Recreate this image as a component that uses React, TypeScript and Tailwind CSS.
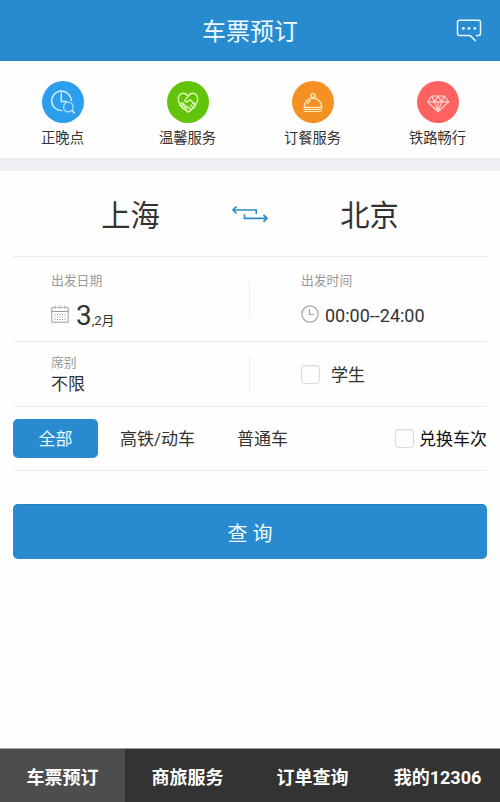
import { useState } from "react";

const services = [
  { label: "正晚点", color: "bg-[#2c9eee]", icon: <PunctualIcon /> },
  { label: "温馨服务", color: "bg-[#62c40a]", icon: <CareIcon /> },
  { label: "订餐服务", color: "bg-[#f49024]", icon: <MealIcon /> },
  { label: "铁路畅行", color: "bg-[#fd6260]", icon: <DiamondIcon /> },
];

const trainTypes = [
  { label: "全部", width: "w-[85px]" },
  { label: "高铁/动车", width: "w-[119px]" },
  { label: "普通车", width: "w-[91px]" },
];

const navItems = ["车票预订", "商旅服务", "订单查询", "我的12306"];

function PunctualIcon() {
  return (
    <svg viewBox="0 0 42 42" className="size-full" fill="none" stroke="#d5f0ff" strokeWidth="1.4">
      <path d="M20.500 29.600A9.800 9.800 0 1 1 29.300 20" />
      <path d="M19.300 11.500v9H25" />
      <circle cx="26.400" cy="26" r="4.800" stroke="#9fdcff" />
      <path d="m29.800 29.400 3 3" />
    </svg>
  );
}

function CareIcon() {
  return (
    <svg viewBox="0 0 42 42" className="size-full" fill="none" stroke="#dcffb8" strokeWidth="1.300" strokeLinejoin="round" strokeLinecap="round">
      <path d="M13.200 23.200c-3-3.600-2.500-8.900 1-10.400 2.800-1.200 5.400.3 6.800 2.500 1.400-2.200 4-3.700 6.800-2.500 3.500 1.500 4 6.800 1 10.400" />
      <path d="m21 15.300-3.300 4.500c.7 1.700 2.600 1.500 3.700.2l1.600-1.300 5.500 4.800" />
      <path d="m12.800 24 2.400-2.400 1.300 1.200-2 2.600 2.900-2 1.200 1.200-2 2.500 2.700-1.800 1.200 1.200-1.800 2.300" />
      <path d="m13.500 24.500 2.300 2.700 2.200 1.300L21 31l2.200-1.400 2.200-2 2-1.400 1.300-2.700" strokeWidth="1.600" />
      <path d="m21.700 26.200 2.300 2.300M23.700 24l2.500 2.500M25.500 22l2.300 2.300" />
    </svg>
  );
}

function MealIcon() {
  return (
    <svg viewBox="0 0 42 42" className="size-full" fill="none" stroke="#ffeab5" strokeWidth="1.400">
      <circle cx="21" cy="14.700" r="2.100" />
      <path d="M12.300 26.500c0-5.500 3.700-9.500 8.700-9.500s8.700 4 8.700 9.500z" />
      <path d="M15.500 23c.5-2 1.700-3.200 3.500-3.700" />
      <path d="M11.500 28.500h19M12 30.500h18" strokeWidth="1.100" />
    </svg>
  );
}

function DiamondIcon() {
  return (
    <svg viewBox="0 0 42 42" className="size-full" fill="none" stroke="#ffd5cf" strokeWidth="1.200" strokeLinejoin="round">
      <path d="M15 15h12l4.700 5.800L21 30.800 10.400 20.800z" />
      <path d="M10.400 20.800h21.300M15 15l2.200 5.800L21 30.500l3.900-9.700L27 15M17.200 20.800l3.800-5.500 3.900 5.500M21 20.800v9.700" />
    </svg>
  );
}

function MessageIcon() {
  return (
    <svg viewBox="0 0 26 24" className="mt-px h-6 w-[26px]" fill="none" stroke="#e4f7ff" strokeWidth="1.500" strokeLinecap="round" strokeLinejoin="round">
      <path d="M20.500 16.600h2a2 2 0 0 0 2-2V3.300a2 2 0 0 0-2-2h-19a2 2 0 0 0-2 2v11.300a2 2 0 0 0 2 2h10.700l5.300 5.200" />
      <g fill="#e4f7ff" stroke="none">
        <circle cx="7.300" cy="9.400" r="1.400" />
        <circle cx="13" cy="9.400" r="1.400" />
        <circle cx="18.800" cy="9.400" r="1.400" />
      </g>
    </svg>
  );
}

function SwapIcon() {
  return (
    <svg viewBox="0 0 38 18" className="h-[18px] w-[38px]" fill="none" stroke="#2e8bc8" strokeWidth="1.700">
      <path d="M5.500 1.500 2 5l3.500 3.500M2 5h23.300v4" />
      <path d="M32.500 9.800 36 13.300l-3.500 3.500M36 13.300H13.500v-4" />
    </svg>
  );
}

function CalendarIcon() {
  return (
    <svg viewBox="0 0 18 18" className="size-[18px]" fill="none" stroke="#9a9a9a">
      <path d="M3 2.500H.8v14.700h16.400V2.500H15M5.500 2.500h2.200M10.300 2.500h2.200M.8 6.500h16.400" />
      <path d="M4.200.5v3.300M9 .5v3.300M13.800.5v3.300" />
      <path d="M3.500 9.500h11M3.500 12h11M3.500 14.500h11" strokeDasharray="1 1.500" />
    </svg>
  );
}

function ClockIcon() {
  return (
    <svg viewBox="0 0 18 18" className="size-[18px]" fill="none" stroke="#a3a3a3" strokeWidth="1.200">
      <circle cx="9" cy="9" r="8.100" />
      <path d="M8.500 4v5.500h4.700" />
    </svg>
  );
}

function Checkbox({ checked, onChange }: { checked: boolean; onChange: () => void }) {
  return (
    <input
      type="checkbox"
      checked={checked}
      onChange={onChange}
      className="size-[19px] shrink-0 appearance-none rounded-[3px] border border-[#dcdcdc] bg-[#fdfdfd] shadow-[inset_0_1px_2px_#eeeeee] checked:bg-[#288bcf]"
    />
  );
}

export default function App() {
  const [trainType, setTrainType] = useState("全部");
  const [student, setStudent] = useState(false);
  const [exchange, setExchange] = useState(false);
  const [activeNav, setActiveNav] = useState("车票预订");

  return (
    <div className="flex h-[802px] w-[500px] flex-col overflow-hidden bg-[#fefefe] font-['Roboto','Noto_Sans_CJK_SC',sans-serif] text-[#333333]">
      {/* Header */}
      <header className="grid h-[61px] shrink-0 grid-cols-[1fr_auto_1fr] items-center border-b border-[#2580bf] bg-[#288bcf] px-[18px]">
        <h1 className="col-start-2 pt-1 text-[24px] leading-[56px] text-[#eefaff]">车票预订</h1>
        <button className="justify-self-end">
          <MessageIcon />
        </button>
      </header>

      {/* Service shortcuts */}
      <section className="grid h-[97px] shrink-0 grid-cols-4 pt-5">
        {services.map((service) => (
          <button key={service.label} className="flex flex-col items-center">
            <span className={`size-[42px] rounded-full ${service.color}`}>{service.icon}</span>
            <span className="mt-1 text-[14.3px] leading-[22px]">{service.label}</span>
          </button>
        ))}
      </section>
      <div className="h-[13px] shrink-0 bg-[#efeef3]" />

      <main className="flex-1 px-[13px]">
        {/* Stations */}
        <section className="grid h-[86px] grid-cols-[1fr_38px_1fr] items-center border-b border-[#ececec] text-[29.3px]">
          <span className="pt-1.5 pl-[17px] text-center">上海</span>
          <SwapIcon />
          <span className="pt-1.5 pr-[17px] text-center">北京</span>
        </section>

        {/* Date and time */}
        <section className="flex h-[85px] items-center border-b border-[#ececec]">
          <div className="h-full w-[236px] pt-3.5 pl-[38px]">
            <p className="text-[12.8px] leading-5 text-[#999999]">出发日期</p>
            <div className="flex h-[46px] items-center">
              <CalendarIcon />
              <p className="pt-[9px] pl-[7px] leading-9">
                <span className="text-[28px]">3</span>
                <span className="text-[13px]">,2月</span>
              </p>
            </div>
          </div>
          <div className="h-[37px] w-px bg-[#ececec]" />
          <div className="h-full flex-1 pt-3.5 pl-[51px]">
            <p className="text-[12.8px] leading-5 text-[#999999]">出发时间</p>
            <div className="flex h-[46px] items-center gap-1.5">
              <ClockIcon />
              <span className="pt-0.5 text-[18px]">00:00--24:00</span>
            </div>
          </div>
        </section>

        {/* Seat class */}
        <section className="flex h-[65px] items-center border-b border-[#ececec]">
          <div className="h-full w-[236px] pt-[11px] pl-[38px]">
            <p className="text-[12.8px] leading-5 text-[#999999]">席别</p>
            <p className="text-[17px] leading-[22px]">不限</p>
          </div>
          <div className="h-[35px] w-px bg-[#ececec]" />
          <label className="flex items-center gap-[11px] pl-[51px] text-[17px]">
            <Checkbox checked={student} onChange={() => setStudent(!student)} />
            <span className="pt-[3px]">学生</span>
          </label>
        </section>

        {/* Train type */}
        <section className="flex h-[64px] items-center border-b border-[#ececec] text-[17px]">
          {trainTypes.map(({ label, width }) => (
            <button
              key={label}
              onClick={() => setTrainType(label)}
              className={`h-[39px] rounded-[5px] pt-0.5 ${width} ${trainType === label ? "bg-[#288bcf] text-[#eefaff]" : ""}`}
            >
              {label}
            </button>
          ))}
          <label className="ml-auto flex items-center gap-[5px] whitespace-nowrap text-[#111111]">
            <Checkbox checked={exchange} onChange={() => setExchange(!exchange)} />
            <span className="pt-0.5">兑换车次</span>
          </label>
        </section>

        <button className="mt-[33px] h-[55px] w-full rounded-[5px] border-t border-[#2580bf] bg-[#288bcf] pt-[3px] text-[20px] text-[#eefaff]">
          查 询
        </button>
      </main>

      {/* Bottom navigation */}
      <nav className="grid h-[54px] shrink-0 grid-cols-4 border-t border-[#a0a0a0] bg-[#333333] text-[18px] font-bold text-white">
        {navItems.map((item) => (
          <button
            key={item}
            onClick={() => setActiveNav(item)}
            className={`pt-[3px] ${activeNav === item ? "bg-[#4d4d4d]" : ""}`}
          >
            {item}
          </button>
        ))}
      </nav>
    </div>
  );
}
